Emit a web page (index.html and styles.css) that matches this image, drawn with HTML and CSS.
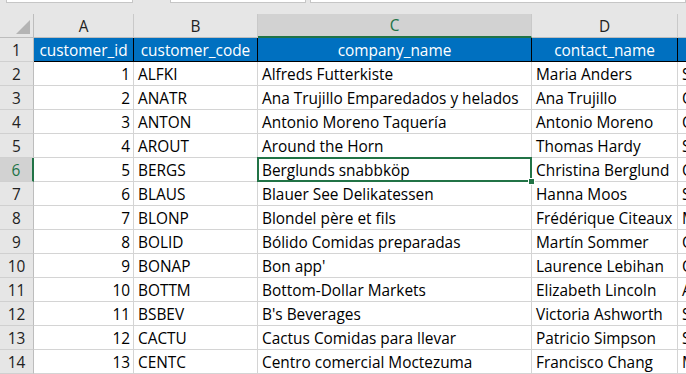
FILE: index.html
```html
<!DOCTYPE html>
<html lang="en">
<head>
  <meta charset="UTF-8" />
  <title>customers.xlsx</title>
  <link rel="stylesheet" href="styles.css">
</head>
<body>
  <!-- top strip: name box / formula bar edges -->
  <div class="topbar">
    <div class="box box-name"></div>
    <div class="box box-fx"></div>
    <div class="box box-formula"></div>
  </div>

  <!-- sheet -->
  <div class="sheet">
    <div class="corner"><span class="tri"></span></div>
    <div class="colhead">A</div>
    <div class="colhead">B</div>
    <div class="colhead sel">C</div>
    <div class="colhead">D</div>
    <div class="colhead">E</div>

    <div class="rowhead">1</div>
    <div class="cell th">customer_id</div>
    <div class="cell th">customer_code</div>
    <div class="cell th">company_name</div>
    <div class="cell th">contact_name</div>
    <div class="cell th">contact_title</div>

    <div class="rowhead">2</div>
    <div class="cell num">1</div>
    <div class="cell">ALFKI</div>
    <div class="cell">Alfreds Futterkiste</div>
    <div class="cell">Maria Anders</div>
    <div class="cell">Sales Representative</div>

    <div class="rowhead">3</div>
    <div class="cell num">2</div>
    <div class="cell">ANATR</div>
    <div class="cell">Ana Trujillo Emparedados y helados</div>
    <div class="cell">Ana Trujillo</div>
    <div class="cell">Owner</div>

    <div class="rowhead">4</div>
    <div class="cell num">3</div>
    <div class="cell">ANTON</div>
    <div class="cell">Antonio Moreno Taquería</div>
    <div class="cell">Antonio Moreno</div>
    <div class="cell">Owner</div>

    <div class="rowhead">5</div>
    <div class="cell num">4</div>
    <div class="cell">AROUT</div>
    <div class="cell">Around the Horn</div>
    <div class="cell">Thomas Hardy</div>
    <div class="cell">Sales Representative</div>

    <div class="rowhead sel">6</div>
    <div class="cell num">5</div>
    <div class="cell">BERGS</div>
    <div class="cell active">Berglunds snabbköp</div>
    <div class="cell">Christina Berglund</div>
    <div class="cell">Order Administrator</div>

    <div class="rowhead">7</div>
    <div class="cell num">6</div>
    <div class="cell">BLAUS</div>
    <div class="cell">Blauer See Delikatessen</div>
    <div class="cell">Hanna Moos</div>
    <div class="cell">Sales Representative</div>

    <div class="rowhead">8</div>
    <div class="cell num">7</div>
    <div class="cell">BLONP</div>
    <div class="cell">Blondel père et fils</div>
    <div class="cell">Frédérique Citeaux</div>
    <div class="cell">Marketing Manager</div>

    <div class="rowhead">9</div>
    <div class="cell num">8</div>
    <div class="cell">BOLID</div>
    <div class="cell">Bólido Comidas preparadas</div>
    <div class="cell">Martín Sommer</div>
    <div class="cell">Owner</div>

    <div class="rowhead">10</div>
    <div class="cell num">9</div>
    <div class="cell">BONAP</div>
    <div class="cell">Bon app'</div>
    <div class="cell">Laurence Lebihan</div>
    <div class="cell">Owner</div>

    <div class="rowhead">11</div>
    <div class="cell num">10</div>
    <div class="cell">BOTTM</div>
    <div class="cell">Bottom-Dollar Markets</div>
    <div class="cell">Elizabeth Lincoln</div>
    <div class="cell">Accounting Manager</div>

    <div class="rowhead">12</div>
    <div class="cell num">11</div>
    <div class="cell">BSBEV</div>
    <div class="cell">B's Beverages</div>
    <div class="cell">Victoria Ashworth</div>
    <div class="cell">Sales Representative</div>

    <div class="rowhead">13</div>
    <div class="cell num">12</div>
    <div class="cell">CACTU</div>
    <div class="cell">Cactus Comidas para llevar</div>
    <div class="cell">Patricio Simpson</div>
    <div class="cell">Sales Agent</div>

    <div class="rowhead">14</div>
    <div class="cell num">13</div>
    <div class="cell">CENTC</div>
    <div class="cell">Centro comercial Moctezuma</div>
    <div class="cell">Francisco Chang</div>
    <div class="cell">Marketing Manager</div>
  </div>
</body>
</html>
```

FILE: styles.css
```css
body {
  margin: 0;
  background-color: #e6e6e6;
  font-family: "Open Sans", Lato, sans-serif;
  font-size: 15.4px;
  color: #000;
  overflow: hidden;
}

/* top strip */
.topbar {
  height: 14px;
  display: flex;
  gap: 4px;
}

.box {
  height: 2px;
  background: white;
  border: 1px solid #c6c6c6;
  border-top: none;
}

.box-name {
  margin-left: 6px;
  width: 125px;
}

.box-fx {
  margin-left: 33px;
  width: 134px;
}

.box-formula {
  flex: 1;
}

/* grid */
.sheet {
  display: grid;
  grid-template-columns: 34px 100px 124px 274px 146px 140px;
  grid-auto-rows: 24px;
  grid-template-rows: 24px;
  width: 818px;
  background: white;
}

.corner {
  background: #e6e6e6;
  border-right: 1px solid #bdbdbd;
  border-bottom: 1px solid #bdbdbd;
  position: relative;
}

.corner .tri {
  position: absolute;
  right: 3px;
  bottom: 3px;
  width: 0;
  height: 0;
  border-left: 14px solid transparent;
  border-bottom: 14px solid #b4b4b4;
}

.colhead {
  background: #e6e6e6;
  border-right: 1px solid #c9c9c9;
  border-bottom: 1px solid #bdbdbd;
  text-align: center;
  line-height: 25px;
  color: #222;
}

.colhead.sel {
  background: #d2d2d2;
  color: #217346;
  border-bottom: 2px solid #217346;
  line-height: 24px;
}

.rowhead {
  background: #e6e6e6;
  border-right: 1px solid #bdbdbd;
  border-bottom: 1px solid #d0d0d0;
  text-align: center;
  line-height: 25px;
  color: #222;
}

.rowhead.sel {
  background: #d2d2d2;
  color: #217346;
  border-right: 2px solid #217346;
}

.cell {
  box-sizing: border-box;
  border-right: 1px solid #d4d4d4;
  border-bottom: 1px solid #d4d4d4;
  padding: 0 3px 0 4px;
  line-height: 25px;
  white-space: nowrap;
  overflow: hidden;
}

.cell.num {
  text-align: right;
}

.cell.th {
  background: #0070c0;
  color: white;
  text-align: center;
  border-right: 1px solid #000;
  border-bottom: 1px solid #000;
  padding: 0;
}

.cell.active {
  position: relative;
  overflow: visible;
}

.cell.active::before {
  content: "";
  position: absolute;
  left: -1px;
  top: -1px;
  right: -1px;
  bottom: -1px;
  border: 2px solid #217346;
}

.cell.active::after {
  content: "";
  position: absolute;
  right: -4px;
  bottom: -4px;
  width: 5px;
  height: 5px;
  background: #217346;
  border: 1px solid white;
}
```
